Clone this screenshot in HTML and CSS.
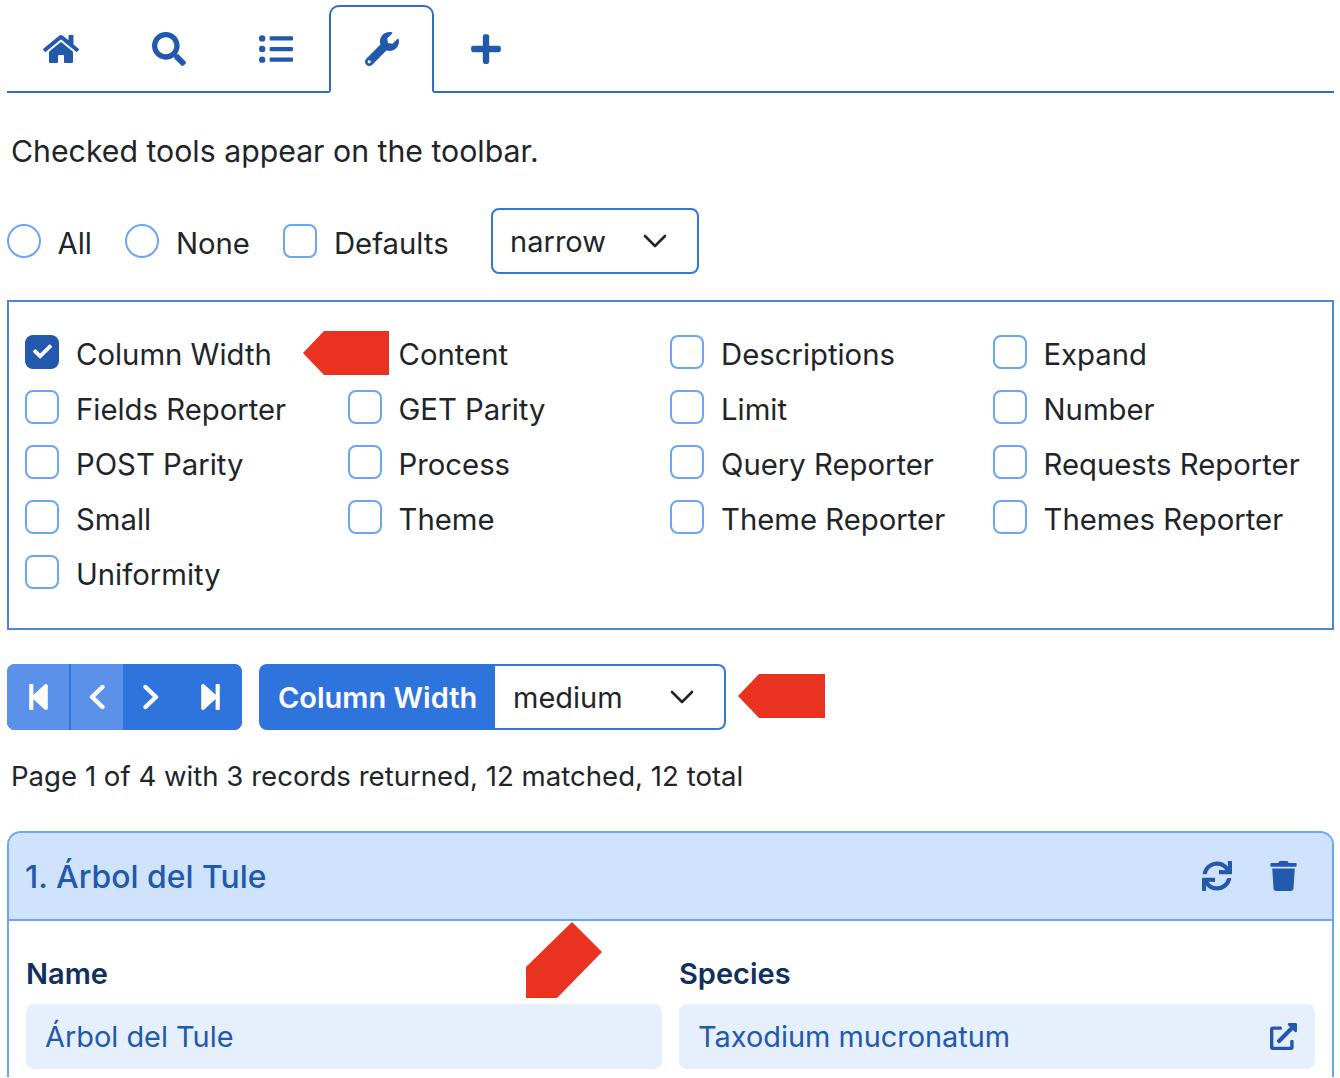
FILE: index.html
```html
<!DOCTYPE html>
<html lang="en">
<head>
    <meta charset="UTF-8">
    <title>Toolbar Tools</title>
    <link rel="stylesheet" href="styles.css">
</head>
<body>
    <nav class="tabs">
        <a class="tab"><svg class="icon-home" viewBox="0 0 576 512"><path d="M280.37 148.26L96 300.11V464a16 16 0 0 0 16 16l112.06-.29a16 16 0 0 0 15.92-16V368a16 16 0 0 1 16-16h64a16 16 0 0 1 16 16v95.64a16 16 0 0 0 16 16.05L464 480a16 16 0 0 0 16-16V300L295.67 148.26a12.19 12.19 0 0 0-15.3 0zM571.6 251.47L488 182.56V44.05a12 12 0 0 0-12-12h-56a12 12 0 0 0-12 12v72.61L318.47 43a48 48 0 0 0-61 0L4.34 251.47a12 12 0 0 0-1.6 16.9l25.5 31A12 12 0 0 0 45.15 301l235.22-193.74a12.19 12.19 0 0 1 15.3 0L530.9 301a12 12 0 0 0 16.9-1.6l25.5-31a12 12 0 0 0-1.7-16.93z"/></svg></a>
        <a class="tab"><svg class="icon-search" viewBox="0 0 512 512"><path d="M505 442.7L405.3 343c-4.5-4.5-10.6-7-17-7H372c27.6-35.3 44-79.7 44-128C416 93.1 322.9 0 208 0S0 93.1 0 208s93.1 208 208 208c48.3 0 92.7-16.4 128-44v16.3c0 6.4 2.5 12.5 7 17l99.7 99.7c9.4 9.4 24.6 9.4 33.9 0l28.3-28.3c9.4-9.4 9.4-24.6.1-34zM208 336c-70.7 0-128-57.2-128-128 0-70.7 57.2-128 128-128 70.7 0 128 57.2 128 128 0 70.7-57.2 128-128 128z"/></svg></a>
        <a class="tab"><svg class="icon-list" viewBox="0 0 512 512"><path d="M48 48a48 48 0 1 0 48 48 48 48 0 0 0-48-48zm0 160a48 48 0 1 0 48 48 48 48 0 0 0-48-48zm0 160a48 48 0 1 0 48 48 48 48 0 0 0-48-48zm448 16H176a16 16 0 0 0-16 16v32a16 16 0 0 0 16 16h320a16 16 0 0 0 16-16v-32a16 16 0 0 0-16-16zm0-320H176a16 16 0 0 0-16 16v32a16 16 0 0 0 16 16h320a16 16 0 0 0 16-16V80a16 16 0 0 0-16-16zm0 160H176a16 16 0 0 0-16 16v32a16 16 0 0 0 16 16h320a16 16 0 0 0 16-16v-32a16 16 0 0 0-16-16z"/></svg></a>
        <a class="tab active"><svg class="icon-wrench" viewBox="0 0 512 512"><path d="M507.73 109.1c-2.24-9.03-13.54-12.09-20.12-5.51l-74.36 74.36-67.88-11.31-11.31-67.88 74.36-74.36c6.62-6.62 3.43-17.9-5.66-20.16-47.38-11.74-99.55.91-136.58 37.93-39.64 39.64-50.55 97.1-34.05 147.2L18.74 402.76c-24.99 24.99-24.99 65.51 0 90.5 24.99 24.99 65.51 24.99 90.5 0l213.21-213.21c50.12 16.71 107.47 5.68 147.37-34.22 37.07-37.07 49.7-89.32 37.91-136.73zM64 472c-13.25 0-24-10.75-24-24 0-13.26 10.75-24 24-24s24 10.74 24 24c0 13.25-10.75 24-24 24z"/></svg></a>
        <a class="tab"><svg class="icon-plus" viewBox="0 0 448 512"><path d="M416 208H272V64c0-17.67-14.33-32-32-32h-32c-17.67 0-32 14.33-32 32v144H32c-17.67 0-32 14.33-32 32v32c0 17.67 14.33 32 32 32h144v144c0 17.67 14.33 32 32 32h32c17.67 0 32-14.33 32-32V304h144c17.67 0 32-14.33 32-32v-32c0-17.67-14.33-32-32-32z"/></svg></a>
    </nav>

    <p class="intro">Checked tools appear on the toolbar.</p>

    <div class="presets">
        <label class="preset"><span class="radio"></span>All</label>
        <label class="preset"><span class="radio"></span>None</label>
        <label class="preset"><span class="box"></span>Defaults</label>
        <div class="select select-narrow">narrow<svg class="chevron" viewBox="0 0 24 14"><polyline points="2,2 12,12 22,2"/></svg></div>
    </div>

    <div class="tools">
        <label class="tool"><span class="box checked"><svg viewBox="0 0 512 512"><path d="M173.898 439.404l-166.4-166.4c-9.997-9.997-9.997-26.206 0-36.204l36.203-36.204c9.997-9.998 26.207-9.998 36.204 0L192 312.69 432.095 72.596c9.997-9.997 26.207-9.997 36.204 0l36.203 36.204c9.997 9.997 9.997 26.206 0 36.204l-294.4 294.401c-9.998 9.997-26.207 9.997-36.204-.001z"/></svg></span>Column Width</label>
        <label class="tool"><span class="box"></span>Content</label>
        <label class="tool"><span class="box"></span>Descriptions</label>
        <label class="tool"><span class="box"></span>Expand</label>
        <label class="tool"><span class="box"></span>Fields Reporter</label>
        <label class="tool"><span class="box"></span>GET Parity</label>
        <label class="tool"><span class="box"></span>Limit</label>
        <label class="tool"><span class="box"></span>Number</label>
        <label class="tool"><span class="box"></span>POST Parity</label>
        <label class="tool"><span class="box"></span>Process</label>
        <label class="tool"><span class="box"></span>Query Reporter</label>
        <label class="tool"><span class="box"></span>Requests Reporter</label>
        <label class="tool"><span class="box"></span>Small</label>
        <label class="tool"><span class="box"></span>Theme</label>
        <label class="tool"><span class="box"></span>Theme Reporter</label>
        <label class="tool"><span class="box"></span>Themes Reporter</label>
        <label class="tool"><span class="box"></span>Uniformity</label>
        <span class="arrow arrow-tools"></span>
    </div>

    <div class="toolbar">
        <div class="pager">
            <button class="page-btn first" disabled><svg class="step" viewBox="64 32 320 448"><path d="M64 468V44c0-6.6 5.4-12 12-12h48c6.6 0 12 5.4 12 12v176.4l195.5-181C352.1 22.3 384 36.6 384 64v384c0 27.4-31.9 41.7-52.5 24.6L136 292.7V468c0 6.6-5.4 12-12 12H76c-6.6 0-12-5.4-12-12z"/></svg></button>
            <button class="page-btn prev" disabled><svg class="angle" viewBox="0 0 16 26"><polyline points="13.5,3 3,13 13.5,23"/></svg></button>
            <button class="page-btn next"><svg class="angle" viewBox="0 0 16 26"><polyline points="2.5,3 13,13 2.5,23"/></svg></button>
            <button class="page-btn last"><svg class="step" viewBox="64 32 320 448"><path d="M384 44v424c0 6.6-5.4 12-12 12h-48c-6.6 0-12-5.4-12-12V291.6l-195.5 181C95.9 489.7 64 475.4 64 448V64c0-27.4 31.9-41.7 52.5-24.6L312 219.3V44c0-6.6 5.4-12 12-12h48c6.6 0 12 5.4 12 12z"/></svg></button>
        </div>
        <div class="width-group">
            <span class="width-label">Column Width</span>
            <div class="select select-medium">medium<svg class="chevron" viewBox="0 0 24 14"><polyline points="2,2 12,12 22,2"/></svg></div>
        </div>
        <span class="arrow arrow-width"></span>
    </div>

    <p class="summary">Page 1 of 4 with 3 records returned, 12 matched, 12 total</p>

    <section class="record">
        <header class="record-head">
            <h2>1. Árbol del Tule</h2>
            <div class="record-actions">
                <svg class="icon-sync" viewBox="0 0 512 512"><path d="M440.65 12.57l4 82.77A247.16 247.16 0 0 0 255.83 8C134.73 8 33.91 94.92 12.29 209.82A12 12 0 0 0 24.09 224h49.05a12 12 0 0 0 11.67-9.26 175.91 175.91 0 0 1 317-56.94l-101.46-4.86a12 12 0 0 0-12.57 12v47.41a12 12 0 0 0 12 12H500a12 12 0 0 0 12-12V12a12 12 0 0 0-12-12h-47.37a12 12 0 0 0-11.98 12.57zM255.83 432a175.61 175.61 0 0 1-146-77.8l101.8 4.87a12 12 0 0 0 12.57-12v-47.4a12 12 0 0 0-12-12H12a12 12 0 0 0-12 12V500a12 12 0 0 0 12 12h47.35a12 12 0 0 0 12-12.6l-4.15-82.57A247.17 247.17 0 0 0 255.83 504c121.11 0 221.93-86.92 243.55-201.82a12 12 0 0 0-11.8-14.18h-49.05a12 12 0 0 0-11.67 9.26A175.86 175.86 0 0 1 255.83 432z"/></svg>
                <svg class="icon-trash" viewBox="0 0 448 512"><path d="M432 32H312l-9.4-18.7A24 24 0 0 0 281.1 0H166.8a23.72 23.72 0 0 0-21.4 13.3L136 32H16A16 16 0 0 0 0 48v32a16 16 0 0 0 16 16h416a16 16 0 0 0 16-16V48a16 16 0 0 0-16-16zM53.2 467a48 48 0 0 0 47.9 45h245.8a48 48 0 0 0 47.9-45L416 128H32z"/></svg>
            </div>
        </header>
        <div class="record-body">
            <div class="field">
                <span class="field-label">Name</span>
                <div class="field-value">Árbol del Tule</div>
            </div>
            <div class="field">
                <span class="field-label">Species</span>
                <div class="field-value">Taxodium mucronatum<svg class="icon-link" viewBox="0 0 512 512"><path d="M432,320H400a16,16,0,0,0-16,16V448H64V128H208a16,16,0,0,0,16-16V80a16,16,0,0,0-16-16H48A48,48,0,0,0,0,112V464a48,48,0,0,0,48,48H400a48,48,0,0,0,48-48V336A16,16,0,0,0,432,320ZM488,0h-128c-21.37,0-32.05,25.91-17,41l35.73,35.73L135,320.37a24,24,0,0,0,0,34L157.67,377a24,24,0,0,0,34,0L435.28,133.32,471,169c15,15,41,4.5,41-17V24A24,24,0,0,0,488,0Z"/></svg></div>
            </div>
            <span class="arrow arrow-name"></span>
        </div>
    </section>
</body>
</html>
```

FILE: styles.css
```css
html, body { height: 1078px; overflow: hidden; }
body { margin: 0; padding: 0 6px 0 7px; background: white; color: #212529; font-family: Inter, "Noto Sans", sans-serif; font-size: 29.3px; }
svg { display: block; fill: #2259ad; }

.tabs { display: flex; height: 86px; padding-top: 5px; border-bottom: 2px solid #2f6cc4; }
.tab { display: flex; align-items: center; padding: 0 36px; margin-bottom: -2px; }
.tab.active { padding: 0 33.5px; border: 2px solid #2f6cc4; border-bottom: 2px solid white; border-radius: 10px 10px 0 0; box-sizing: border-box; }
.icon-home { width: 36px; height: 32px; }
.icon-search { width: 36px; height: 34px; }
.icon-list { width: 34px; height: 34px; }
.icon-wrench { width: 34px; height: 34px; }
.icon-plus { width: 32px; height: 34px; }

.intro { margin: 35px 0 0 4px; font-size: 30.25px; line-height: 46px; }

.presets { display: flex; align-items: center; margin-top: 34px; height: 66px; }
.preset { display: flex; align-items: center; gap: 16.5px; margin-right: 33.5px; padding-top: 5px; }
.preset .radio, .preset .box { margin-top: -5px; }
.radio, .box { flex: none; width: 34px; height: 34px; box-sizing: border-box; border: 2px solid #6ba5f5; background: white; }
.radio { border-radius: 50%; }
.box { border-radius: 8px; display: flex; align-items: center; justify-content: center; }
.box.checked { background: #2259ad; border-color: #2259ad; }
.box.checked svg { width: 19px; height: 19px; fill: white; }

.select { display: flex; align-items: center; justify-content: space-between; box-sizing: border-box; height: 66px; background: white; border: 2px solid #3576dc; }
.select-narrow { width: 208px; margin-left: 9px; padding: 0 30px 0 17px; border-radius: 8px; font-size: 29px; }
.select-medium { width: 231px; padding: 0 30px 0 18px; border-left: 0; border-radius: 0 8px 8px 0; font-size: 29px; }
.chevron { width: 24px; height: 14px; fill: none; stroke: #212529; stroke-width: 2.6; stroke-linecap: round; stroke-linejoin: round; }

.tools { position: relative; display: grid; grid-template-columns: repeat(4, 1fr); grid-auto-rows: 55px; margin-top: 26px; padding: 22px 17px 29px 16px; border: 2px solid #4a86e0; }
.tool { display: flex; align-items: center; gap: 17px; padding-top: 6px; }
.tool .box { margin-top: -6px; }

.toolbar { position: relative; display: flex; gap: 17px; margin-top: 34px; height: 66px; }
.pager { display: flex; width: 235px; border-radius: 8px; overflow: hidden; background: #2f74dd; }
.page-btn { display: flex; align-items: center; justify-content: center; padding: 0; border: 0; background: #2f74dd; }
.page-btn[disabled] { background: #5b91e8; }
.page-btn.first { width: 64px; border-right: 2px solid #2f74dd; }
.page-btn.prev { width: 52px; }
.page-btn.next { width: 55px; }
.page-btn.last { width: 64px; }
.step { width: 19px; height: 26px; fill: white; }
.angle { width: 16px; height: 26px; fill: none; stroke: white; stroke-width: 4.4; stroke-linecap: round; stroke-linejoin: round; }
.width-group { display: flex; }
.width-label { display: flex; align-items: center; width: 236px; box-sizing: border-box; padding-left: 19px; background: #2f74dd; color: white; font-size: 29px; font-weight: 600; border-radius: 8px 0 0 8px; }

.summary { margin: 26px 0 0 4px; font-size: 27.6px; line-height: 40px; }

.record { height: 246px; box-sizing: border-box; margin-top: 35px; border: 2px solid #6ba5f5; border-bottom: 0; border-radius: 14px 14px 0 0; }
.record-head { display: flex; align-items: center; justify-content: space-between; height: 88px; box-sizing: border-box; padding: 0 35px 0 16px; background: #cfe3fc; border-bottom: 2px solid #6ba5f5; border-radius: 12px 12px 0 0; }
.record-head h2 { margin: 0; font-size: 31.9px; font-weight: 500; color: #2259ad; }
.record-actions { display: flex; gap: 38px; }
.icon-sync { width: 30px; height: 30px; }
.icon-trash { width: 27px; height: 30px; }

.record-body { position: relative; display: grid; grid-template-columns: 636px 636px; gap: 17px; padding: 33px 17px 0; }
.field-label { display: block; line-height: 40px; font-size: 29px; font-weight: 600; color: #12305f; }
.field-value { display: flex; align-items: center; justify-content: space-between; height: 65px; margin-top: 10px; padding: 0 18px 0 19px; background: #e6f0fd; border-radius: 8px; color: #2259ad; font-size: 28.9px; }
.icon-link { width: 27px; height: 27px; }

.arrow { position: absolute; background: #e9321f; }
.arrow-tools { left: 294px; top: 29px; width: 86px; height: 44px; clip-path: polygon(0 50%, 21px 0, 100% 0, 100% 100%, 21px 100%); }
.arrow-width { left: 731px; top: 10px; width: 87px; height: 44px; clip-path: polygon(0 50%, 21px 0, 100% 0, 100% 100%, 21px 100%); }
.arrow-name { left: 517px; top: 1px; width: 76px; height: 76px; clip-path: polygon(46px 0, 76px 30px, 31px 76px, 0 76px, 0 45px); }
```
